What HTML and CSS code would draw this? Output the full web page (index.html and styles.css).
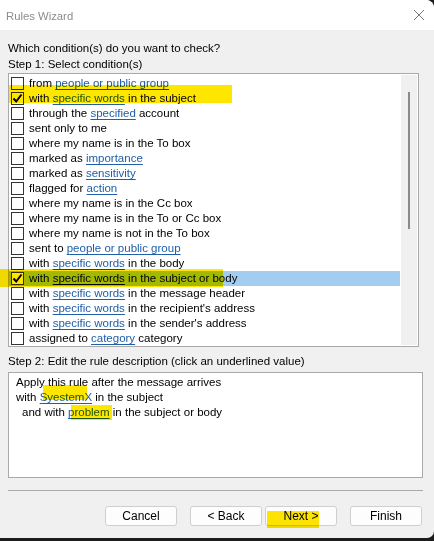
FILE: index.html
```html
<!DOCTYPE html>
<html>
<head>
<meta charset="utf-8">
<link rel="stylesheet" href="styles.css">
</head>
<body>
<div class="window">
  <div class="titlebar">
    <span class="title">Rules Wizard</span>
    <svg class="close" width="12" height="12" viewBox="0 0 12 12"><path d="M1 1 L11 11 M11 1 L1 11" stroke="#7a7a7a" stroke-width="1" fill="none"/></svg>
  </div>
  <div class="content">
    <div class="label">Which condition(s) do you want to check?</div>
    <div class="label">Step 1: Select condition(s)</div>
    <div class="listbox">
      <div class="rows">
        <div class="row"><span class="cb"></span><span>from <a>people or public group</a></span></div>
        <div class="row"><span class="cb checked"><svg width="11" height="11" viewBox="0 0 11 11"><path d="M1.5 5.5 L4.2 8.5 L9.5 1.5" stroke="#000" stroke-width="2" fill="none"/></svg></span><span>with <a>specific words</a> in the subject</span></div>
        <div class="row"><span class="cb"></span><span>through the <a>specified</a> account</span></div>
        <div class="row"><span class="cb"></span><span>sent only to me</span></div>
        <div class="row"><span class="cb"></span><span>where my name is in the To box</span></div>
        <div class="row"><span class="cb"></span><span>marked as <a>importance</a></span></div>
        <div class="row"><span class="cb"></span><span>marked as <a>sensitivity</a></span></div>
        <div class="row"><span class="cb"></span><span>flagged for <a>action</a></span></div>
        <div class="row"><span class="cb"></span><span>where my name is in the Cc box</span></div>
        <div class="row"><span class="cb"></span><span>where my name is in the To or Cc box</span></div>
        <div class="row"><span class="cb"></span><span>where my name is not in the To box</span></div>
        <div class="row"><span class="cb"></span><span>sent to <a>people or public group</a></span></div>
        <div class="row"><span class="cb"></span><span>with <a>specific words</a> in the body</span></div>
        <div class="row selected"><span class="cb checked"><svg width="11" height="11" viewBox="0 0 11 11"><path d="M1.5 5.5 L4.2 8.5 L9.5 1.5" stroke="#000" stroke-width="2" fill="none"/></svg></span><span>with <a class="sel">specific words</a> in the subject or body</span></div>
        <div class="row"><span class="cb"></span><span>with <a>specific words</a> in the message header</span></div>
        <div class="row"><span class="cb"></span><span>with <a>specific words</a> in the recipient's address</span></div>
        <div class="row"><span class="cb"></span><span>with <a>specific words</a> in the sender's address</span></div>
        <div class="row"><span class="cb"></span><span>assigned to <a>category</a> category</span></div>
      </div>
      <div class="scrollbar"><div class="thumb"></div></div>
    </div>
    <div class="label step2">Step 2: Edit the rule description (click an underlined value)</div>
    <div class="descbox">
      <div>Apply this rule after the message arrives</div>
      <div>with <a>SyestemX</a> in the subject</div>
      <div class="indent">and with <a>problem</a> in the subject or body</div>
    </div>
    <div class="separator"></div>
    <div class="buttons">
      <button class="btn">Cancel</button>
      <div class="pair">
        <button class="btn">&lt; Back</button>
        <button class="btn">Next &gt;</button>
      </div>
      <button class="btn">Finish</button>
    </div>
  </div>
  <span class="hl hl1"></span>
  <span class="hl hl2"></span>
  <span class="hl hl3"></span>
  <span class="hl hl4"></span>
  <span class="hl hl5"></span>
</div>
</body>
</html>
```
FILE: styles.css
```css
html, body {
  margin: 0;
  padding: 0;
  background: #1c1c1c;
}
body {
  width: 434px;
  height: 541px;
  overflow: hidden;
  font-family: "Liberation Sans", Arial, sans-serif;
  font-size: 11.5px;
  color: #000;
}
.window {
  position: relative;
  width: 434px;
  height: 538px;
  background: #f0f0f0;
  border-top-right-radius: 8px;
  border-bottom-right-radius: 7px;
  overflow: hidden;
  display: flex;
  flex-direction: column;
}
.titlebar {
  height: 30px;
  flex: 0 0 30px;
  background: #fff;
  display: flex;
  align-items: center;
  justify-content: space-between;
  padding: 0 9px 0 6px;
}
.title {
  color: #8c8c8c;
  font-size: 11.3px;
  margin-top: 1px;
}
.content {
  padding: 10px 0 0 8px;
  display: flex;
  flex-direction: column;
}
.label {
  line-height: 16px;
  height: 16px;
}
.listbox {
  margin-top: 1px;
  width: 409px;
  height: 272px;
  border: 1px solid #a9a9a9;
  background: #fff;
  display: flex;
  justify-content: space-between;
}
.rows {
  padding-top: 2px;
  width: 391px;
}
.row {
  height: 15px;
  display: flex;
  align-items: center;
  white-space: nowrap;
  line-height: 15px;
}
.row.selected {
  background: #a3cdf0;
}
.cb {
  width: 11px;
  height: 11px;
  border: 1px solid #333;
  margin: 0 5px 0 2px;
  background: #fff;
  flex: 0 0 auto;
  display: flex;
  align-items: center;
  justify-content: center;
}
a {
  color: #1f5ea8;
  text-decoration: underline;
  text-underline-offset: 2px;
}
a.sel {
  color: #000;
}
.scrollbar {
  width: 16px;
  margin: 1px 1px 1px 0;
  background: #f0f0f0;
  display: flex;
  justify-content: center;
}
.thumb {
  margin-top: 17px;
  width: 2px;
  height: 137px;
  background: #8a8a8a;
}
.step2 {
  margin-top: 6px;
}
.descbox {
  margin-top: 3px;
  width: 403px;
  height: 99px;
  border: 1px solid #a9a9a9;
  background: #fff;
  padding: 2px 3px 3px 7px;
  line-height: 15px;
}
.descbox .indent {
  padding-left: 6px;
}
.separator {
  margin-top: 12px;
  width: 415px;
  height: 1px;
  background: #a9a9a9;
}
.buttons {
  margin-top: 15px;
  width: 414px;
  display: flex;
  justify-content: flex-end;
  gap: 13px;
}
.pair {
  display: flex;
  gap: 3px;
}
.btn {
  width: 72px;
  height: 20px;
  border: 1px solid #cfcfcf;
  border-radius: 3px;
  background: #fdfdfd;
  font-family: "Liberation Sans", Arial, sans-serif;
  font-size: 12px;
  color: #000;
  padding: 0;
}
.hl {
  position: absolute;
  background: #ffe600;
  mix-blend-mode: multiply;
}
.hl1 { left: 9px; top: 85px; width: 223px; height: 18px; }
.hl2 { left: 0; top: 269px; width: 223px; height: 18px; }
.hl3 { left: 43px; top: 385px; width: 44px; height: 15px; }
.hl4 { left: 71px; top: 405px; width: 41px; height: 15px; }
.hl5 { left: 267px; top: 511px; width: 52px; height: 17px; }
```
